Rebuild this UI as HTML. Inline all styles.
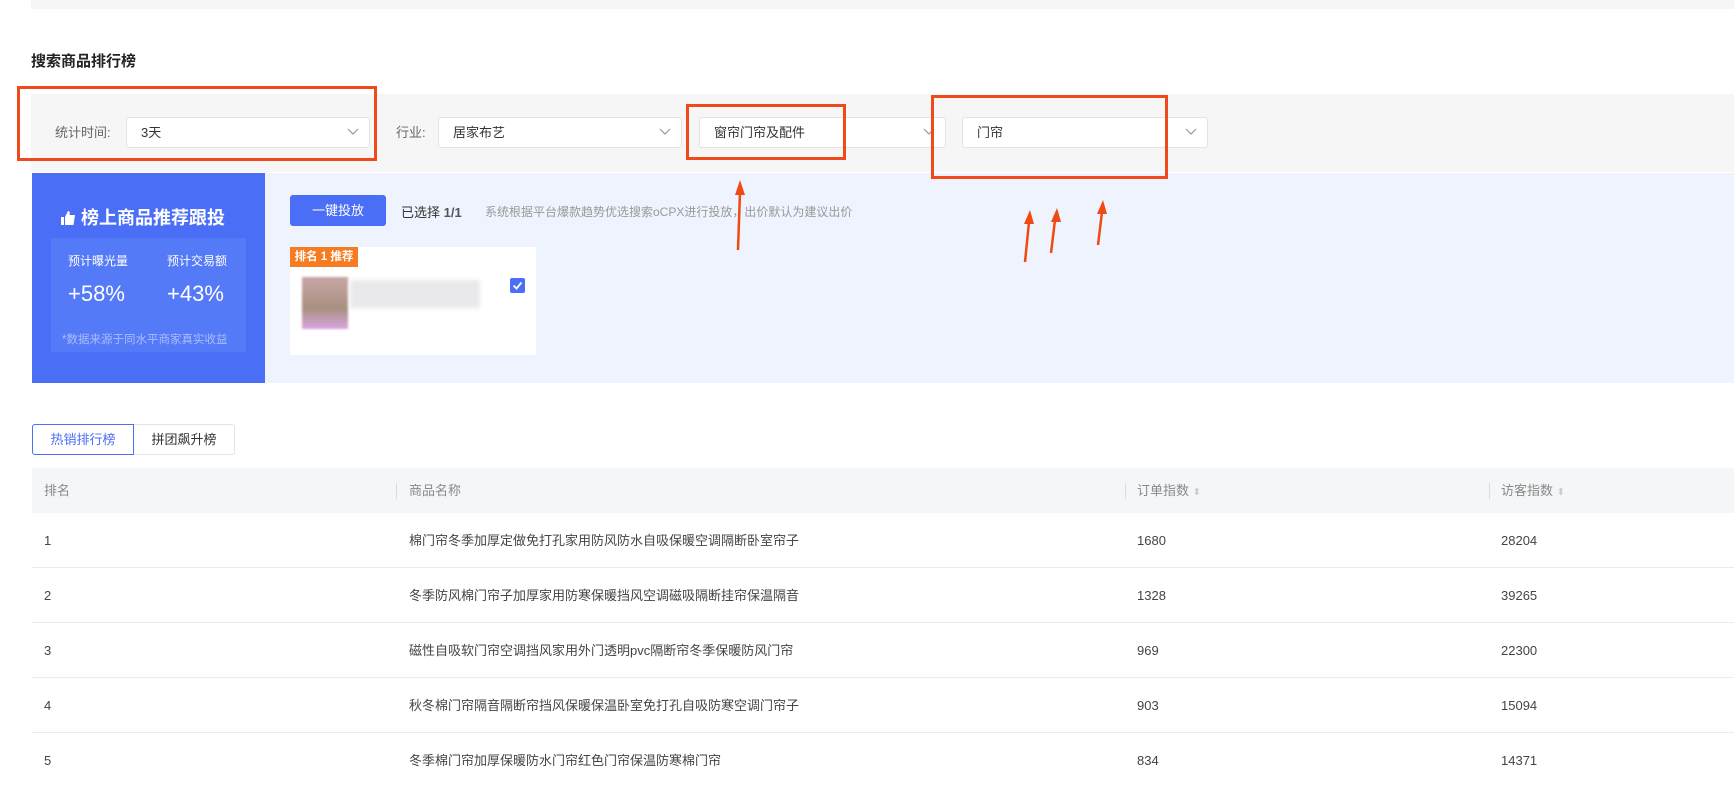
<!DOCTYPE html>
<html><head><meta charset="utf-8"><style>
*{box-sizing:border-box;margin:0;padding:0}
body{width:1734px;height:778px;overflow:hidden;background:#fff;font-family:"Liberation Sans","Noto Sans CJK SC",sans-serif;color:#333;position:relative}
.a{position:absolute}
.sel{position:absolute;top:117px;height:31px;background:#fff;border:1px solid #e3e3e6;border-radius:3px;font-size:13px;line-height:29px;padding-left:14px;color:#333}
.sel svg{position:absolute;right:10px;top:10px}
.lbl{position:absolute;top:117px;line-height:31px;font-size:13px;color:#666}
.red{position:absolute;border:3px solid #ee4a1c;z-index:5}
.th{position:absolute;top:468px;height:45px;line-height:45px;font-size:13px;color:#888}
.dv{position:absolute;top:483px;width:1px;height:16px;background:#ddd}
.row{position:absolute;left:32px;width:1702px;height:55px;border-bottom:1px solid #ebebeb;font-size:13px;color:#444}
.row span{position:absolute;top:0;line-height:55px}
</style></head><body>
<div class="a" style="left:31px;top:0;width:1703px;height:9px;background:#f6f6f6"></div>
<div class="a" style="left:31px;top:50px;font-size:15px;font-weight:bold;color:#222">搜索商品排行榜</div>
<div class="a" style="left:31px;top:94px;width:1703px;height:78px;background:#f6f6f7"></div>
<div class="lbl" style="left:55px">统计时间:</div>
<div class="sel" style="left:126px;width:244px">3天<svg width="12" height="8" viewBox="0 0 12 8"><path d="M1 1l5 5 5-5" fill="none" stroke="#999" stroke-width="1.2"/></svg></div>
<div class="lbl" style="left:396px">行业:</div>
<div class="sel" style="left:438px;width:244px">居家布艺<svg width="12" height="8" viewBox="0 0 12 8"><path d="M1 1l5 5 5-5" fill="none" stroke="#999" stroke-width="1.2"/></svg></div>
<div class="sel" style="left:699px;width:247px">窗帘门帘及配件<svg width="12" height="8" viewBox="0 0 12 8"><path d="M1 1l5 5 5-5" fill="none" stroke="#999" stroke-width="1.2"/></svg></div>
<div class="sel" style="left:962px;width:246px">门帘<svg width="12" height="8" viewBox="0 0 12 8"><path d="M1 1l5 5 5-5" fill="none" stroke="#999" stroke-width="1.2"/></svg></div>

<div class="a" style="left:32px;top:173px;width:233px;height:210px;background:#4a6ef5"></div>
<div class="a" style="left:265px;top:173px;width:1469px;height:210px;background:#eef3fd"></div>
<div class="a" style="left:61px;top:204px;color:#fff;font-size:18px;font-weight:bold">
<svg width="15" height="14" viewBox="0 0 15 14" style="vertical-align:-1px"><path d="M0 6h3v8H0zM4 6l3-6c2 0 2 2 1.5 4H14l-1.5 10H4z" fill="#fff"/></svg> 榜上商品推荐跟投</div>
<div class="a" style="left:51px;top:238px;width:195px;height:114px;background:#557af7"></div>
<div class="a" style="left:68px;top:252px;color:#fff;font-size:12px">预计曝光量</div>
<div class="a" style="left:167px;top:252px;color:#fff;font-size:12px">预计交易额</div>
<div class="a" style="left:68px;top:281px;color:#fff;font-size:22px">+58%</div>
<div class="a" style="left:167px;top:281px;color:#fff;font-size:22px">+43%</div>
<div class="a" style="left:62px;top:331px;color:#aabdfc;font-size:11.5px">*数据来源于同水平商家真实收益</div>

<div class="a" style="left:290px;top:195px;width:96px;height:31px;background:#4a6ef5;border-radius:3px;color:#fff;font-size:13px;line-height:31px;text-align:center">一键投放</div>
<div class="a" style="left:401px;top:202px;font-size:13px;color:#333">已选择 <b style="color:#555">1/1</b></div>
<div class="a" style="left:485px;top:203px;font-size:12px;color:#999">系统根据平台爆款趋势优选搜索oCPX进行投放，出价默认为建议出价</div>
<div class="a" style="left:290px;top:247px;width:246px;height:108px;background:#fff"></div>
<div class="a" style="left:290px;top:247px;width:68px;height:20px;background:#f57c22;color:#fff;font-size:11.5px;line-height:20px;text-align:center;font-weight:bold">排名 1 推荐</div>
<div class="a" style="left:302px;top:277px;width:46px;height:52px;background:linear-gradient(180deg,#c9a6a6,#a89080 60%,#d8a6e0);filter:blur(1px)"></div>
<div class="a" style="left:350px;top:280px;width:130px;height:28px;background:#e9e9ec;filter:blur(2px)"></div>
<div class="a" style="left:510px;top:278px;width:15px;height:15px;background:#4a6ef5;border-radius:2px"><svg width="15" height="15" viewBox="0 0 15 15"><path d="M3.5 7.5l3 3 5-6" fill="none" stroke="#fff" stroke-width="1.8"/></svg></div>

<div class="red" style="left:17px;top:86px;width:360px;height:75px"></div>
<div class="red" style="left:686px;top:104px;width:160px;height:56px"></div>
<div class="red" style="left:931px;top:95px;width:237px;height:84px"></div>

<svg class="a" style="left:0;top:0;z-index:6" width="1734" height="400">
<g stroke="#f04a14" stroke-width="2.5" fill="#f04a14">
<line x1="738" y1="250" x2="740" y2="192"/><path d="M740 180l-5 15h10z" stroke="none"/>
<line x1="1025" y1="262" x2="1029" y2="222"/><path d="M1030 210l-6 14h10z" stroke="none"/>
<line x1="1051" y1="253" x2="1055" y2="220"/><path d="M1057 208l-6 14h10z" stroke="none"/>
<line x1="1098" y1="245" x2="1102" y2="212"/><path d="M1103 200l-6 14h10z" stroke="none"/>
</g></svg>

<div class="a" style="left:32px;top:424px;width:102px;height:31px;border:1px solid #4a6ef5;border-radius:3px 0 0 3px;color:#4a6ef5;font-size:13px;line-height:29px;text-align:center;background:#fff">热销排行榜</div>
<div class="a" style="left:134px;top:424px;width:101px;height:31px;border:1px solid #e3e3e6;border-left:none;border-radius:0 3px 3px 0;color:#333;font-size:13px;line-height:29px;text-align:center">拼团飙升榜</div>

<div class="a" style="left:32px;top:468px;width:1702px;height:45px;background:#f5f6f8"></div>
<div class="th" style="left:44px">排名</div>
<div class="dv" style="left:396px"></div><div class="th" style="left:409px">商品名称</div>
<div class="dv" style="left:1125px"></div><div class="th" style="left:1137px">订单指数 <span style="color:#ccc;font-size:10px">⬍</span></div>
<div class="dv" style="left:1489px"></div><div class="th" style="left:1501px">访客指数 <span style="color:#ccc;font-size:10px">⬍</span></div>

<div class="row" style="top:513px"><span style="left:12px">1</span><span style="left:377px">棉门帘冬季加厚定做免打孔家用防风防水自吸保暖空调隔断卧室帘子</span><span style="left:1105px">1680</span><span style="left:1469px">28204</span></div>
<div class="row" style="top:568px"><span style="left:12px">2</span><span style="left:377px">冬季防风棉门帘子加厚家用防寒保暖挡风空调磁吸隔断挂帘保温隔音</span><span style="left:1105px">1328</span><span style="left:1469px">39265</span></div>
<div class="row" style="top:623px"><span style="left:12px">3</span><span style="left:377px">磁性自吸软门帘空调挡风家用外门透明pvc隔断帘冬季保暖防风门帘</span><span style="left:1105px">969</span><span style="left:1469px">22300</span></div>
<div class="row" style="top:678px"><span style="left:12px">4</span><span style="left:377px">秋冬棉门帘隔音隔断帘挡风保暖保温卧室免打孔自吸防寒空调门帘子</span><span style="left:1105px">903</span><span style="left:1469px">15094</span></div>
<div class="row" style="top:733px;border:none"><span style="left:12px">5</span><span style="left:377px">冬季棉门帘加厚保暖防水门帘红色门帘保温防寒棉门帘</span><span style="left:1105px">834</span><span style="left:1469px">14371</span></div>
</body></html>
